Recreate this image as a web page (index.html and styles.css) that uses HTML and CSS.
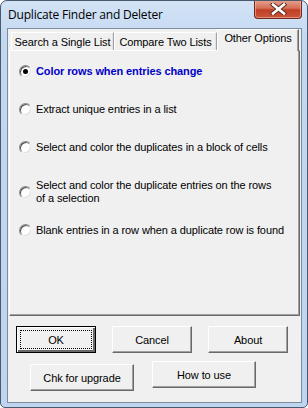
FILE: index.html
```html
<!DOCTYPE html>
<html lang="en">
<head>
  <meta charset="UTF-8">
  <title>Duplicate Finder and Deleter</title>
  <link rel="stylesheet" href="styles.css">
</head>
<body>
<div class="window">
  <div class="titlebar">
    <span class="title">Duplicate Finder and Deleter</span>
    <div class="close">
      <svg width="17" height="12" viewBox="0 0 17 12">
        <path d="M3 1.5 L14 10.5 M14 1.5 L3 10.5" stroke="#5a2a20" stroke-width="4.4" stroke-linecap="square"/>
        <path d="M3 1.5 L14 10.5 M14 1.5 L3 10.5" stroke="#fff" stroke-width="2.6" stroke-linecap="square"/>
      </svg>
    </div>
  </div>

  <div class="client">
    <div class="tabs">
      <div class="tab">Search a Single List</div>
      <div class="tab">Compare Two Lists</div>
      <div class="tab active">Other Options</div>
    </div>

    <div class="panel">
      <div class="option">
        <span class="radio checked"></span>
        <span class="label bold">Color rows when entries change</span>
      </div>
      <div class="option">
        <span class="radio"></span>
        <span class="label">Extract unique entries in a list</span>
      </div>
      <div class="option">
        <span class="radio"></span>
        <span class="label">Select and color the duplicates in a block of cells</span>
      </div>
      <div class="option">
        <span class="radio"></span>
        <span class="label">Select and color the duplicate entries on the rows<br>of a selection</span>
      </div>
      <div class="option tight">
        <span class="radio"></span>
        <span class="label">Blank entries in a row when a duplicate row is found</span>
      </div>
    </div>

    <div class="buttons">
      <div class="button-row">
        <button class="btn default"><span class="focus">OK</span></button>
        <button class="btn">Cancel</button>
        <button class="btn">About</button>
      </div>
      <div class="button-row second">
        <button class="btn wide lower">Chk for upgrade</button>
        <button class="btn wide">How to use</button>
      </div>
    </div>
  </div>
</div>
</body>
</html>
```

FILE: styles.css
```css
body {
  margin: 0;
  padding: 0;
  background: #fff;
  font-family: "Liberation Sans", Arial, sans-serif;
  font-size: 11px;
  letter-spacing: -0.1px;
  color: #000;
}

.window {
  width: 308px;
  height: 408px;
  box-sizing: border-box;
  border: 1px solid #4a5a6e;
  border-radius: 7px 7px 5px 5px;
  background: linear-gradient(to bottom, #d3e3f6, #c2d8f1 40px, #bfd5ef);
  display: flex;
  flex-direction: column;
  overflow: hidden;
}

.titlebar {
  height: 27px;
  display: flex;
  justify-content: space-between;
  align-items: flex-start;
  flex-shrink: 0;
}

.title {
  font-family: "Open Sans", "Noto Sans", sans-serif;
  font-size: 12px;
  letter-spacing: -0.2px;
  line-height: 16px;
  padding: 6px 0 0 7px;
  color: #000;
}

.close {
  width: 46px;
  height: 18px;
  margin: -1px 5px 0 0;
  border: 1px solid #6e2a1e;
  border-top: none;
  border-radius: 0 0 4px 4px;
  background: linear-gradient(to bottom, #e8a493, #d46f57 45%, #c23f25 55%, #c9553b);
  box-shadow: inset 0 0 0 1px rgba(255, 200, 180, 0.5);
  display: flex;
  align-items: center;
  justify-content: center;
}

.client {
  flex: 1;
  margin: 0 5px 4px 6px;
  border: 1px solid #7b8ba0;
  background: #f0f0f0;
  display: flex;
  flex-direction: column;
}

.tabs {
  display: flex;
  align-items: flex-end;
  height: 21px;
  margin-left: 3px;
}

.tab {
  height: 18px;
  box-sizing: border-box;
  padding: 2px 0 0 0;
  text-align: center;
  border: 1px solid #fff;
  border-bottom: none;
  border-right-color: #a0a0a0;
  box-shadow: inset -1px 0 0 #e3e3e3;
  width: 103px;
  line-height: 14px;
}

.tab.active {
  height: 22px;
  width: 82px;
  margin-bottom: -1px;
  background: #f0f0f0;
  border-right-color: #696969;
  box-shadow: inset -1px 0 0 #a0a0a0;
  position: relative;
  z-index: 1;
  padding-top: 1px;
}

.panel {
  margin-left: 1px;
  width: 291px;
  height: 266px;
  box-sizing: border-box;
  border: 1px solid;
  border-color: #fff #696969 #696969 #fff;
  box-shadow: inset -1px -1px 0 #a0a0a0;
  padding: 14px 0 0 9px;
  display: flex;
  flex-direction: column;
  gap: 25px;
}

.option {
  display: flex;
  align-items: center;
  gap: 4px;
}

.option.tight {
  margin-top: -6px;
}

.label {
  line-height: 13px;
}

.label.bold {
  font-weight: bold;
  color: #0000c8;
}

.radio {
  width: 13px;
  height: 13px;
  box-sizing: border-box;
  border-radius: 50%;
  border: 1px solid;
  border-color: #8a8a8a #f4f4f4 #f4f4f4 #8a8a8a;
  background: #fff;
  box-shadow: inset 1px 1px 0 #505050, inset -1px -1px 0 #dcdcdc;
  flex-shrink: 0;
  position: relative;
}

.radio.checked::after {
  content: "";
  position: absolute;
  left: 3px;
  top: 3px;
  width: 5px;
  height: 5px;
  border-radius: 50%;
  background: #000;
}

.buttons {
  padding: 10px 0 0 8px;
  display: flex;
  flex-direction: column;
  gap: 8px;
}

.button-row {
  display: flex;
  gap: 16px;
  align-items: flex-start;
}

.button-row.second {
  margin-left: 14px;
  gap: 18px;
}

.btn {
  width: 80px;
  height: 27px;
  padding: 0;
  font-family: inherit;
  font-size: 11px;
  letter-spacing: inherit;
  color: #000;
  background: #f0f0f0;
  border: 1px solid;
  border-color: #fff #696969 #696969 #fff;
  box-shadow: inset -1px -1px 0 #a0a0a0;
  display: flex;
  align-items: center;
  justify-content: center;
}

.btn.wide {
  width: 104px;
}

.btn.lower {
  margin-top: 3px;
}

.btn.default {
  border: 1px solid #000;
  box-shadow: inset 1px 1px 0 #fff, inset -2px -2px 0 #696969;
  padding: 3px;
}

.focus {
  flex: 1;
  align-self: stretch;
  display: flex;
  align-items: center;
  justify-content: center;
  border: 1px dotted #000;
}
```
